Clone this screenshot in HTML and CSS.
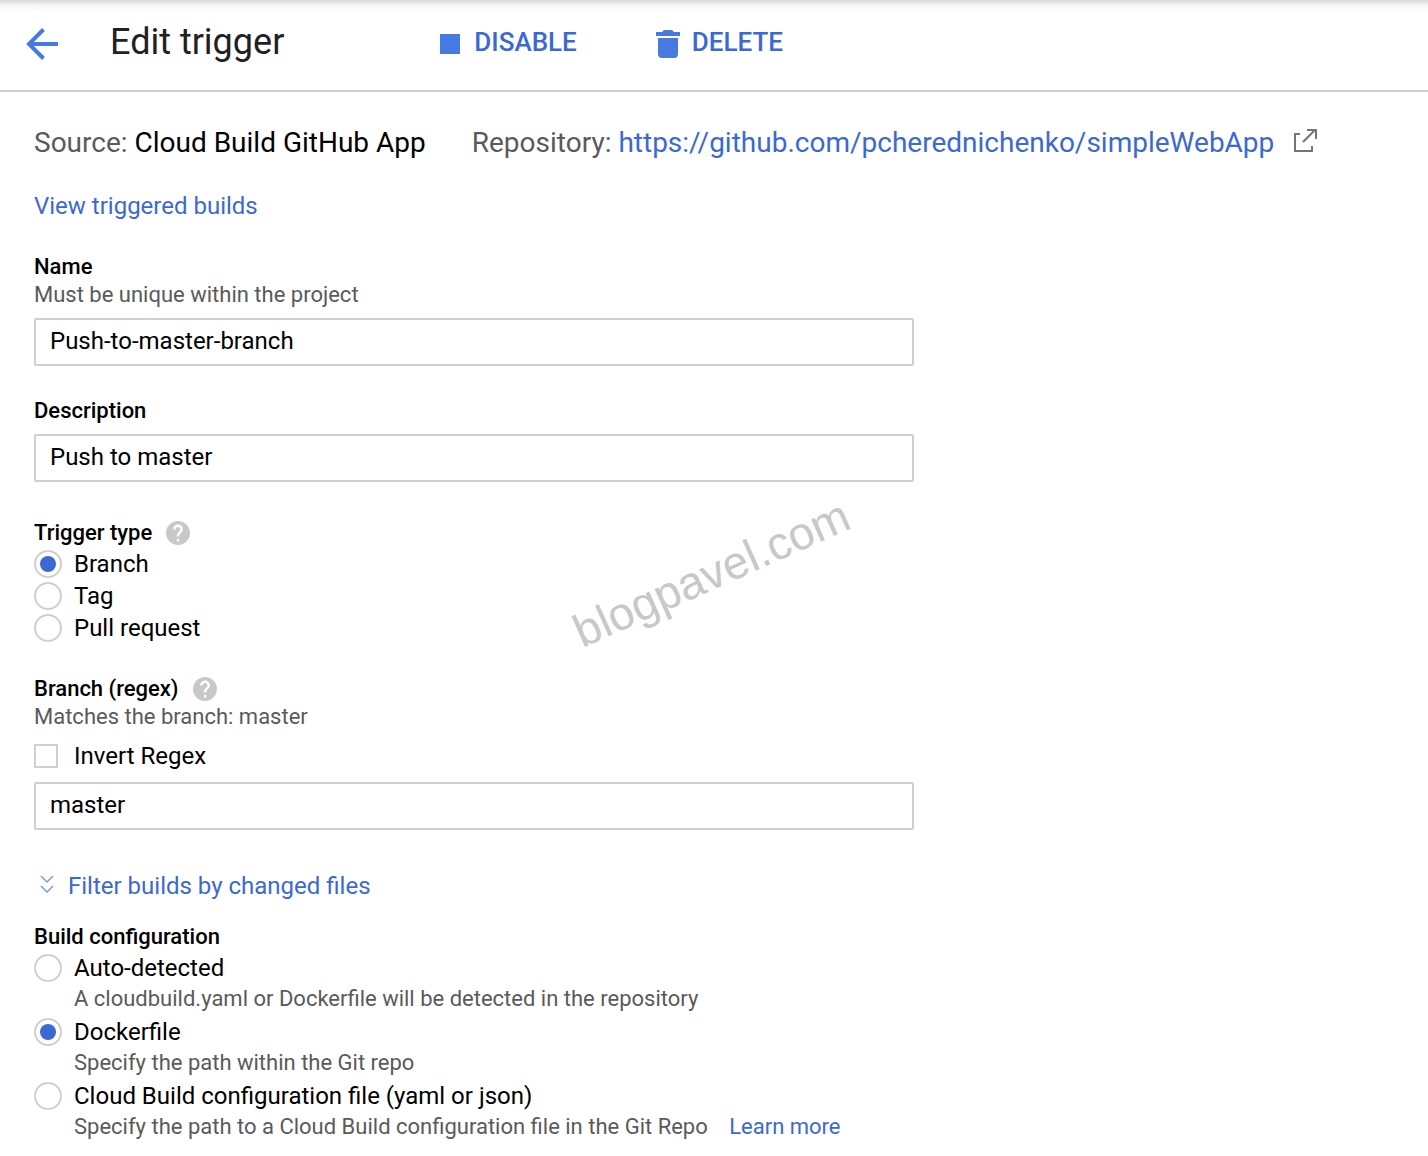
FILE: index.html
```html
<!DOCTYPE html>
<html lang="en">
<head>
    <meta charset="UTF-8">
    <meta name="viewport" content="width=device-width, initial-scale=1.0">
    <title>Edit trigger</title>
    <link rel="stylesheet" href="styles.css">
</head>
<body>
    <header class="header">
        <button class="back-btn" type="button" aria-label="Back">
            <svg width="32" height="32" viewBox="0 0 32 32" fill="none" stroke="currentColor" stroke-width="4"><path d="M32 16H3M17.500 1.500L3 16l14.500 14.500"/></svg>
        </button>
        <h1>Edit trigger</h1>
        <div class="actions">
            <button class="action-btn disable-btn" type="button">
                <svg width="20" height="20" viewBox="0 0 20 20" fill="currentColor"><path d="M0 0h20v20H0z"/></svg>
                <span>DISABLE</span>
            </button>
            <button class="action-btn delete-btn" type="button">
                <svg width="24" height="28" viewBox="0 0 24 28" fill="currentColor"><path d="M0 2h6l2-2h8l2 2h6v4H0zM2 8h20v16q0 4-4 4H6q-4 0-4-4z"/></svg>
                <span>DELETE</span>
            </button>
        </div>
    </header>

    <main class="content">
        <div class="source-row">
            <div><span class="muted">Source:</span> Cloud Build GitHub App</div>
            <div class="repository">
                <span class="muted">Repository:</span> <a href="#">https://github.com/pcherednichenko/simpleWebApp</a>
                <svg class="external" width="24" height="24" viewBox="0 0 24 24" fill="none" stroke="currentColor" stroke-width="2"><path d="M7 5H2v17h17v-5M10 13L22 1M14 1h9v9"/></svg>
            </div>
        </div>
        <a class="builds-link" href="#">View triggered builds</a>

        <form>
            <div class="field">
                <label class="title" for="name">Name</label>
                <p class="hint">Must be unique within the project</p>
                <input class="text-input" type="text" id="name" value="Push-to-master-branch">
            </div>

            <div class="field">
                <label class="title" for="description">Description</label>
                <input class="text-input" type="text" id="description" value="Push to master">
            </div>

            <fieldset class="field trigger-type">
                <legend class="title">Trigger type
                    <button class="help" type="button" aria-label="Help"><svg width="24" height="24" viewBox="2 2 20 20" fill="currentColor"><path d="M12 2C6.480 2 2 6.480 2 12s4.480 10 10 10 10-4.480 10-10S17.520 2 12 2zm1 17h-2v-2h2v2zm2.070-7.750l-.9.920C13.450 12.900 13 13.500 13 15h-2v-.5c0-1.100.450-2.100 1.170-2.830l1.240-1.260c.370-.360.590-.860.590-1.410 0-1.100-.9-2-2-2s-2 .9-2 2H8c0-2.210 1.790-4 4-4s4 1.790 4 4c0 .880-.360 1.680-.930 2.250z"/></svg></button>
                </legend>
                <label class="option"><input type="radio" name="type" checked> Branch</label>
                <label class="option"><input type="radio" name="type"> Tag</label>
                <label class="option"><input type="radio" name="type"> Pull request</label>
            </fieldset>

            <div class="field">
                <div class="title">
                    <label for="regex">Branch (regex)</label>
                    <button class="help" type="button" aria-label="Help"><svg width="24" height="24" viewBox="2 2 20 20" fill="currentColor"><path d="M12 2C6.480 2 2 6.480 2 12s4.480 10 10 10 10-4.480 10-10S17.520 2 12 2zm1 17h-2v-2h2v2zm2.070-7.750l-.9.920C13.450 12.900 13 13.500 13 15h-2v-.5c0-1.100.450-2.100 1.170-2.830l1.240-1.260c.370-.360.590-.860.590-1.410 0-1.100-.9-2-2-2s-2 .9-2 2H8c0-2.210 1.790-4 4-4s4 1.790 4 4c0 .880-.360 1.680-.930 2.250z"/></svg></button>
                </div>
                <p class="hint">Matches the branch: master</p>
                <label class="option invert"><input type="checkbox"> Invert Regex</label>
                <input class="text-input" type="text" id="regex" value="master">
            </div>

            <button class="filter-btn" type="button">
                <svg width="14" height="18" viewBox="0 0 14 18" fill="none" stroke="currentColor" stroke-width="1.500"><path d="M1 1l6 6 6-6M1 11l6 6 6-6"/></svg>
                <span>Filter builds by changed files</span>
            </button>

            <fieldset class="field build-config">
                <legend class="title">Build configuration</legend>
                <label class="option"><input type="radio" name="config"> Auto-detected</label>
                <p class="option-hint">A cloudbuild.yaml or Dockerfile will be detected in the repository</p>
                <label class="option"><input type="radio" name="config" checked> Dockerfile</label>
                <p class="option-hint">Specify the path within the Git repo</p>
                <label class="option"><input type="radio" name="config"> Cloud Build configuration file (yaml or json)</label>
                <p class="option-hint">Specify the path to a Cloud Build configuration file in the Git Repo <a href="#">Learn more</a></p>
            </fieldset>
        </form>
    </main>

    <div class="watermark">blogpavel.com</div>
</body>
</html>
```

FILE: styles.css
```css
* { box-sizing: border-box; }
body { margin: 0; position: relative; background: white; color: #000; font-family: Roboto, "Liberation Sans", sans-serif; font-size: 24px; line-height: 32px; }
h1, p, fieldset, legend { margin: 0; padding: 0; border: none; }
a { color: #3b69d1; text-decoration: none; }
button { padding: 0; border: none; background: none; color: #3b69d1; font: inherit; cursor: pointer; }
svg { display: block; flex: none; }

.header { display: flex; align-items: center; padding: 20px 26px 22px; border-bottom: 2px solid #d0d0d0; background: linear-gradient(#d8d8d8, #f4f4f4 5px, #fff 12px); }
.header h1 { margin-left: 52px; padding-bottom: 4px; font-size: 36px; font-weight: 400; line-height: 44px; color: #212121; }
.back-btn { color: #4779e2; }
.actions { display: flex; gap: 79px; margin-left: 156px; }
.action-btn { display: flex; align-items: center; font-size: 26px; font-weight: 500; }
.action-btn svg { color: #4779e2; }
.action-btn span { padding-bottom: 4px; }
.disable-btn { gap: 14px; }
.delete-btn { gap: 12px; }

.content { padding: 35px 34px 14px; }
.source-row { display: flex; flex-wrap: wrap; gap: 0 46px; margin-bottom: 31px; font-size: 28px; }
.repository { display: flex; align-items: center; gap: 7px; }
.muted { color: #5a5a5a; }
.external { margin: 0 0 4px 12px; color: #757575; }
.builds-link { display: block; width: fit-content; }

.field { max-width: 880px; margin-top: 31px; }
.title { display: flex; align-items: center; gap: 14px; font-size: 22px; font-weight: 500; line-height: 28px; }
.hint { font-size: 22px; line-height: 28px; color: #5a5a5a; }
.help { color: #c8c8c8; }
.text-input { display: block; width: 100%; height: 48px; margin-top: 9px; padding: 0 14px 2px; border: 2px solid #d0d0d0; border-radius: 2px; background: white; color: #000; font: inherit; }

.option { display: flex; align-items: center; gap: 12px; width: fit-content; }
.option input { appearance: none; display: grid; place-items: center; width: 28px; height: 28px; margin: 0; border: 2px solid #d0d0d0; background: white; }
.option input[type="radio"] { border-radius: 50%; }
.option input[type="radio"]:checked::before { content: ""; width: 16px; height: 16px; border-radius: 50%; background: #3b69d1; }
.option input[type="checkbox"] { width: 24px; height: 24px; }
.invert { gap: 16px; margin: 9px 0 10px; }
.invert + .text-input { margin-top: 0; }
.option-hint { margin: 0 0 2px 40px; font-size: 22px; line-height: 30px; color: #5a5a5a; }
.option-hint a { margin-left: 16px; }

.trigger-type { margin-top: 37px; }
.trigger-type .title, .build-config .title { margin-bottom: 1px; }
.filter-btn { display: flex; align-items: center; gap: 14px; margin-top: 40px; padding-left: 6px; }
.filter-btn svg { margin-bottom: 4px; color: #7c9ce6; }
.build-config { margin-top: 21px; }

.watermark { position: absolute; left: 563px; top: 550px; font-family: "Liberation Sans", Arial, sans-serif; font-size: 46px; line-height: 46px; color: #c8c8c8; transform: rotate(-24deg); pointer-events: none; }
```
